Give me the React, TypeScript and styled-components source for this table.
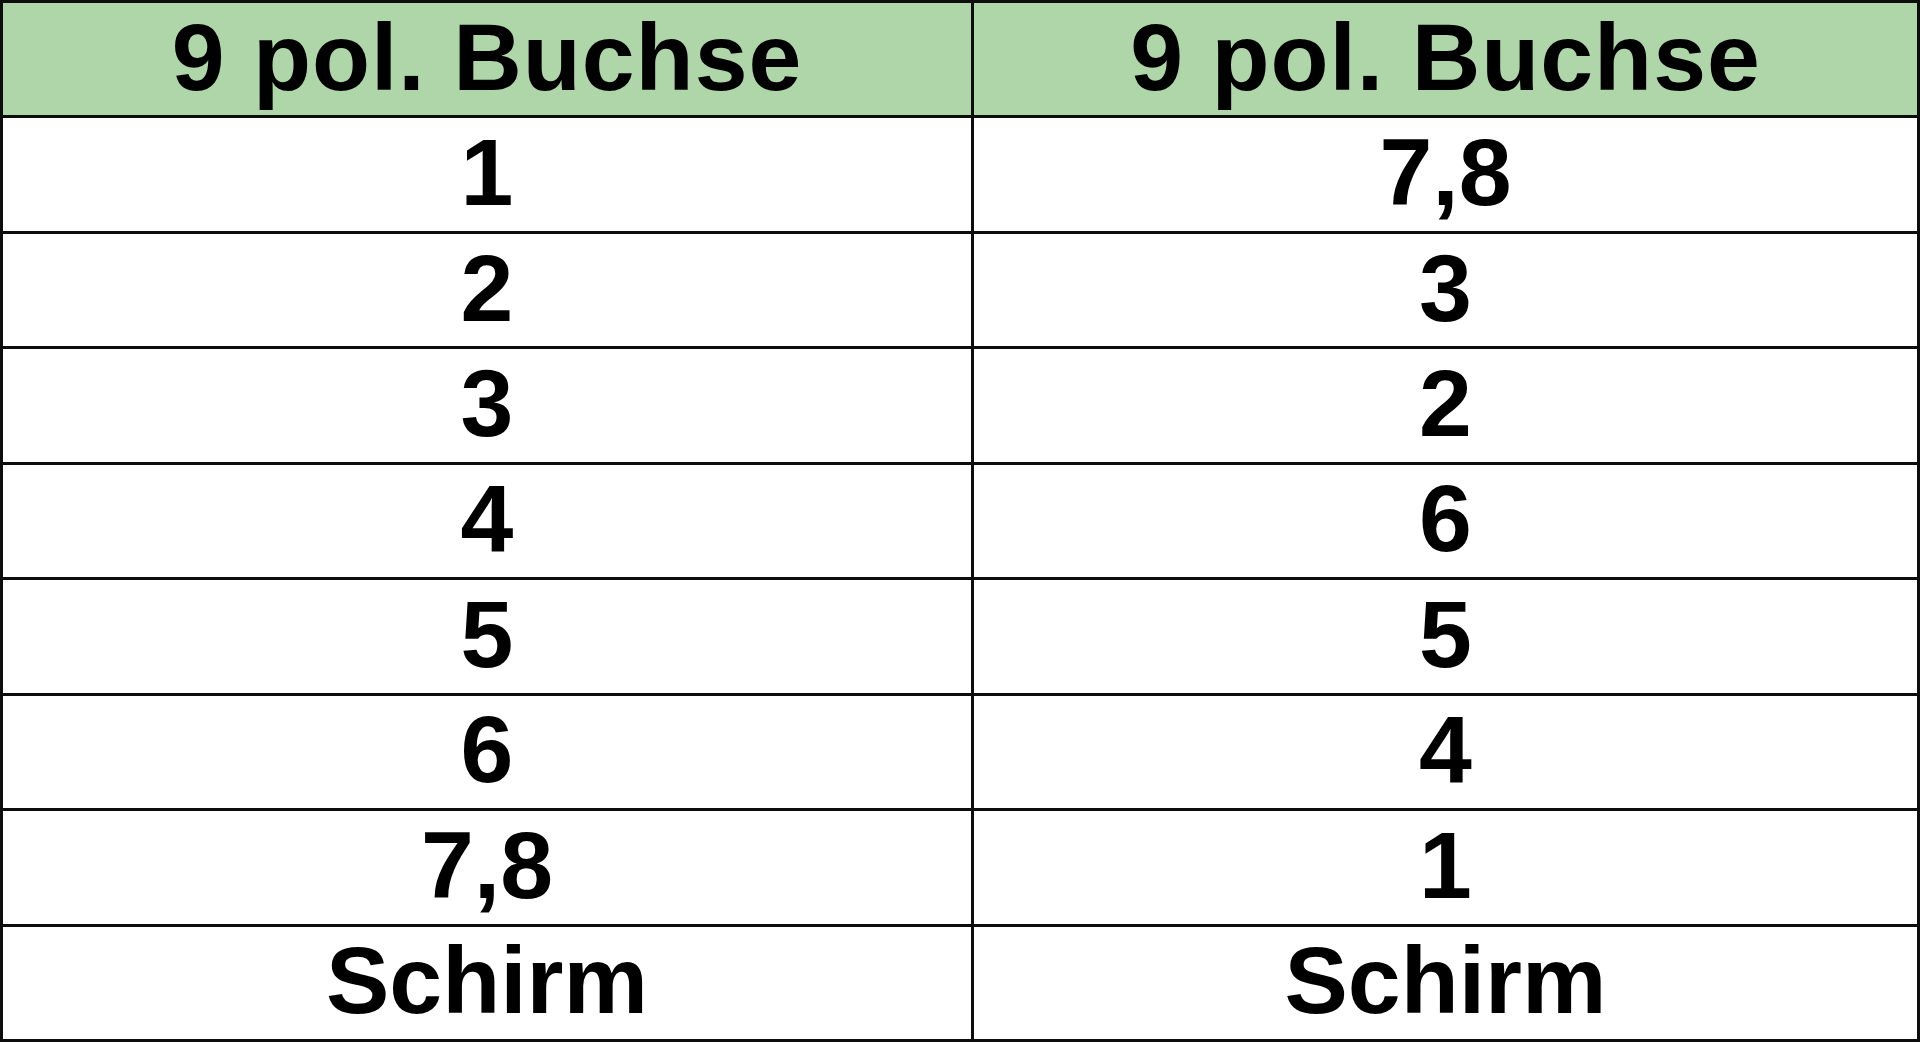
import { Fragment } from "react";
import styled, { createGlobalStyle } from "styled-components";

const GlobalStyle = createGlobalStyle`
  html, body {
    margin: 0;
    padding: 0;
    background: #ffffff;
  }
`;

const Table = styled.div`
  width: 1920px;
  height: 1042px;
  box-sizing: border-box;
  display: grid;
  grid-template-columns: 968px 1fr;
  grid-template-rows: repeat(9, 1fr);
  gap: 3px;
  padding: 3px;
  background: #0d0d0d;
  font-family: "Liberation Sans", Arial, sans-serif;
  font-weight: 700;
  color: #000000;
`;

const Cell = styled.div<{ $head?: boolean }>`
  display: flex;
  align-items: center;
  justify-content: center;
  background: ${(p) => (p.$head ? "#afd6a9" : "#ffffff")};
  font-size: 95px;
  line-height: 1;
  letter-spacing: ${(p) => (p.$head ? "1px" : "0")};
  padding-bottom: 4px;
  box-sizing: border-box;
`;

const rows: [string, string][] = [
  ["1", "7,8"],
  ["2", "3"],
  ["3", "2"],
  ["4", "6"],
  ["5", "5"],
  ["6", "4"],
  ["7,8", "1"],
  ["Schirm", "Schirm"],
];

export default function App() {
  return (
    <>
      <GlobalStyle />
      <Table>
        <Cell $head>9 pol. Buchse</Cell>
        <Cell $head>9 pol. Buchse</Cell>
        {rows.map(([a, b], i) => (
          <Fragment key={i}>
            <Cell>{a}</Cell>
            <Cell>{b}</Cell>
          </Fragment>
        ))}
      </Table>
    </>
  );
}
